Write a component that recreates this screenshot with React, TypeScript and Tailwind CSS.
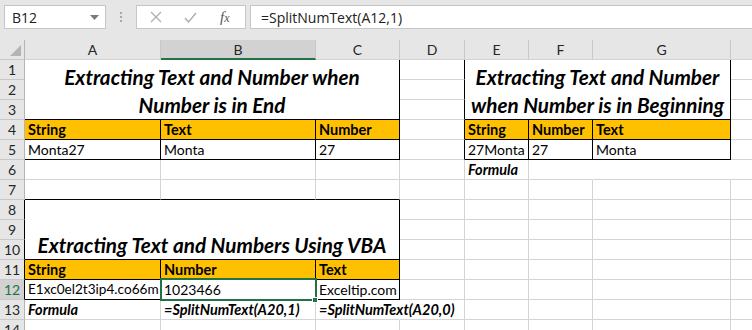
import React from 'react';

type Side = 'g' | 'k' | 'w';
const RB: Record<Side, string> = { g: 'border-r-[#d4d4d4]', k: 'border-r-black', w: 'border-r-white' };
const BB: Record<Side, string> = { g: 'border-b-[#d4d4d4]', k: 'border-b-black', w: 'border-b-white' };

function Cell({
  r = 'g',
  b = 'g',
  className = '',
  textClass = 'text-[14px]',
  children,
}: {
  r?: Side;
  b?: Side;
  className?: string;
  textClass?: string;
  children?: React.ReactNode;
}) {
  return (
    <div className={`relative flex items-center border-r border-b ${RB[r]} ${BB[b]} ${className}`}>
      {children !== undefined && (
        <span className={`whitespace-nowrap px-[3px] leading-[19px] text-black ${textClass}`}>{children}</span>
      )}
    </div>
  );
}

function RowHead({ n, black = false, sel = false }: { n: number; black?: boolean; sel?: boolean }) {
  return (
    <div
      className={`flex items-center justify-center border-r border-b border-b-[#c8c8c8] text-[14px] ${
        black ? 'border-r-black' : 'border-r-[#b4b4b4]'
      } ${sel ? 'bg-[#d2d2d2] text-[#217346]' : 'bg-[#e6e6e6] text-[#262626]'}`}
    >
      {n}
    </div>
  );
}

function ColHead({ l, sel = false }: { l: string; sel?: boolean }) {
  return (
    <div
      className={`flex items-center justify-center border-r border-r-[#c8c8c8] text-[14px] text-[#262626] ${
        sel ? 'bg-[#d2d2d2] border-b-2 border-b-[#217346]' : 'bg-[#e6e6e6] border-b border-b-[#d4d4d4]'
      }`}
    >
      {l}
    </div>
  );
}

const hdr = 'text-[14.5px] font-bold';
const bi = 'text-[14.5px] font-bold italic';
const org = 'bg-[#ffc000]';

function Title({ lines, className }: { lines: string[]; className: string }) {
  return (
    <div className={`flex flex-col items-center justify-end border-r border-b border-r-black border-b-black ${className}`}>
      {lines.map((l) => (
        <div key={l} className="whitespace-nowrap text-[20.7px] font-bold italic leading-[28px] text-black">
          {l}
        </div>
      ))}
    </div>
  );
}

export default function App() {
  return (
    <div className="h-[330px] w-[752px] overflow-hidden bg-white font-['Lato',_'Liberation_Sans',_sans-serif]">
      {/* Formula bar */}
      <div className="flex h-[40px] items-start bg-[#e6e6e6] pl-[4px] pt-[5px]">
        <div className="flex h-[24px] w-[102px] items-center justify-between border border-[#c6c6c6] bg-white pl-[7px] pr-[6px]">
          <span className="font-['Open_Sans',_sans-serif] text-[14px] text-[#222]">B12</span>
          <svg width="9" height="5" viewBox="0 0 9 5">
            <path d="M0 0 L9 0 L4.5 5 Z" fill="#7a7a7a" />
          </svg>
        </div>
        <div className="flex h-[24px] w-[30px] flex-col items-center justify-center gap-[2px]">
          <div className="h-[2px] w-[2px] bg-[#a8a8a8]" />
          <div className="h-[2px] w-[2px] bg-[#a8a8a8]" />
          <div className="h-[2px] w-[2px] bg-[#a8a8a8]" />
        </div>
        <div className="relative flex h-[24px] w-[110px] items-center border border-[#c6c6c6] bg-white">
          <svg className="ml-[13px]" width="12" height="12" viewBox="0 0 12 12">
            <path d="M1 1 L11 11 M11 1 L1 11" stroke="#b0b0b0" strokeWidth="1.4" />
          </svg>
          <svg className="ml-[22px]" width="13" height="11" viewBox="0 0 13 11">
            <path d="M1 6 L4.5 10 L12 1" stroke="#b0b0b0" strokeWidth="1.5" fill="none" />
          </svg>
          <span className="ml-[23px] font-['Liberation_Serif',_serif] text-[15px] italic leading-none text-[#555]">
            f<span className="text-[12px]">x</span>
          </span>
        </div>
        <div className="ml-[4px] flex h-[24px] flex-1 items-center border border-r-0 border-[#c6c6c6] bg-white pl-[10px]">
          <span className="font-['Open_Sans',_sans-serif] text-[14px] text-[#222]">=SplitNumText(A12,1)</span>
        </div>
      </div>

      {/* Grid */}
      <div className="grid w-[831px] grid-cols-[25px_136px_155px_84px_65px_64px_64px_138px_100px] grid-rows-[repeat(15,20px)]">
        {/* header */}
        <div className="relative border-r border-b border-r-[#b4b4b4] border-b-[#c8c8c8] bg-[#e6e6e6]">
          <svg className="absolute left-[10px] top-[5px]" width="11" height="11" viewBox="0 0 11 11">
            <path d="M11 0 L11 11 L0 11 Z" fill="#b4b4b4" />
          </svg>
        </div>
        <ColHead l="A" />
        <ColHead l="B" sel />
        <ColHead l="C" />
        <ColHead l="D" />
        <ColHead l="E" />
        <ColHead l="F" />
        <ColHead l="G" />
        <ColHead l="" />

        {/* row 1 */}
        <RowHead n={1} />
        <Title className="col-span-3 row-span-3" lines={['Extracting Text and Number when', 'Number is in End']} />
        <Cell r="k" />
        <Title className="col-span-3 row-span-3" lines={['Extracting Text and Number', 'when Number is in Beginning']} />
        <Cell />
        {/* row 2 */}
        <RowHead n={2} />
        <Cell r="k" />
        <Cell />
        {/* row 3 */}
        <RowHead n={3} />
        <Cell r="k" />
        <Cell />

        {/* row 4 */}
        <RowHead n={4} />
        <Cell r="k" b="k" className={org} textClass={hdr}>String</Cell>
        <Cell r="k" b="k" className={org} textClass={hdr}>Text</Cell>
        <Cell r="k" b="k" className={org} textClass={hdr}>Number</Cell>
        <Cell r="k" />
        <Cell r="k" b="k" className={org} textClass={hdr}>String</Cell>
        <Cell r="k" b="k" className={org} textClass={hdr}>Number</Cell>
        <Cell r="k" b="k" className={org} textClass={hdr}>Text</Cell>
        <Cell />

        {/* row 5 */}
        <RowHead n={5} />
        <Cell r="k" b="k">Monta27</Cell>
        <Cell r="k" b="k">Monta</Cell>
        <Cell r="k" b="k">27</Cell>
        <Cell r="k" />
        <Cell r="k" b="k">27Monta</Cell>
        <Cell r="k" b="k">27</Cell>
        <Cell r="k" b="k">Monta</Cell>
        <Cell />

        {/* row 6 */}
        <RowHead n={6} />
        <Cell />
        <Cell />
        <Cell />
        <Cell />
        <Cell textClass={bi}>Formula</Cell>
        <Cell r="w" />
        <Cell r="w" />
        <Cell r="w" />

        {/* row 7 */}
        <RowHead n={7} />
        <Cell b="k" />
        <Cell b="k" />
        <Cell b="k" />
        <Cell />
        <Cell />
        <Cell />
        <Cell />
        <Cell />

        {/* row 8 */}
        <RowHead n={8} black />
        <Title className="col-span-3 row-span-3" lines={['Extracting Text and Numbers Using VBA']} />
        <Cell />
        <Cell />
        <Cell />
        <Cell />
        <Cell />
        {/* row 9 */}
        <RowHead n={9} black />
        <Cell />
        <Cell />
        <Cell />
        <Cell />
        <Cell />
        {/* row 10 */}
        <RowHead n={10} black />
        <Cell />
        <Cell />
        <Cell />
        <Cell />
        <Cell />

        {/* row 11 */}
        <RowHead n={11} black />
        <Cell r="k" b="k" className={org} textClass={hdr}>String</Cell>
        <Cell r="k" b="k" className={org} textClass={hdr}>Number</Cell>
        <Cell r="k" b="k" className={org} textClass={hdr}>Text</Cell>
        <Cell />
        <Cell />
        <Cell />
        <Cell />
        <Cell />

        {/* row 12 */}
        <RowHead n={12} black sel />
        <Cell r="k" b="k" textClass="text-[13.6px]">E1xc0el2t3ip4.co66m</Cell>
        <div className="relative flex items-center border-r border-b border-r-black border-b-black">
          <span className="whitespace-nowrap px-[3px] text-[14px] leading-[19px] text-black">1023466</span>
          <div className="pointer-events-none absolute -left-[1px] -top-[2px] z-10 h-[23px] w-[157px] border-2 border-[#217346]" />
          <div className="absolute -right-[3px] -bottom-[4px] z-20 h-[6px] w-[6px] border border-white bg-[#217346]" />
        </div>
        <Cell r="k" b="k">Exceltip.com</Cell>
        <Cell />
        <Cell />
        <Cell />
        <Cell />
        <Cell />

        {/* row 13 */}
        <RowHead n={13} />
        <Cell textClass={bi}>Formula</Cell>
        <Cell textClass={bi}>=SplitNumText(A20,1)</Cell>
        <Cell r="w" textClass={bi}>=SplitNumText(A20,0)</Cell>
        <Cell />
        <Cell />
        <Cell />
        <Cell />
        <Cell />

        {/* row 14 */}
        <RowHead n={14} />
        <Cell />
        <Cell />
        <Cell />
        <Cell />
        <Cell />
        <Cell />
        <Cell />
        <Cell />
      </div>
    </div>
  );
}
